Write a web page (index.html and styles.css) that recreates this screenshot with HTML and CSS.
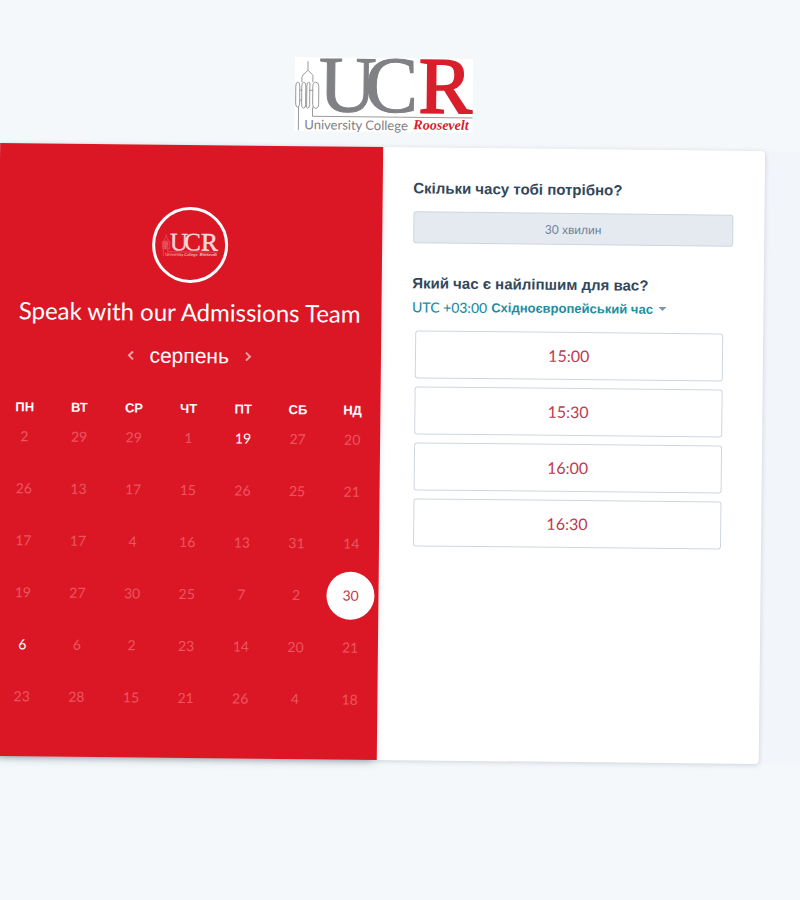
FILE: index.html
```
<!DOCTYPE html>
<html lang="uk">
<head>
<meta charset="utf-8">
<meta name="viewport" content="width=device-width, initial-scale=1">
<title>Speak with our Admissions Team</title>
<link rel="stylesheet" href="styles.css">
</head>
<body>
<svg class="defs" width="0" height="0" aria-hidden="true">
  <symbol id="ucr" viewBox="0 0 178 74" overflow="visible">
    <g class="tower">
      <path d="M13 4v9l-5 5-1 2v5M13 13l5 5v7M4 50v23M18 50v9H178"/>
      <path d="M1 29q0-4 2-4t2 4v17q0 4-2 4t-2-4zM7 29q0-4 2-4t2 4v18q0 4-2 4t-2-4zM12 29q0-4 2-4t1 4v18q0 4-2 4t-1-4zM18 29q0-4 3-4t3 4v18q0 4-3 4t-3-4zM5 33h2M5 43h2M15 33h3"/>
    </g>
    <text class="letter" x="24" y="54" font-size="80">U</text>
    <text class="letter" x="70" y="54" font-size="80">C</text>
    <text class="letter accent heavy" x="124" y="54" font-size="80">R</text>
    <text class="name" x="10" y="72" font-size="13">University College</text>
    <text class="name-em accent" x="119" y="71" font-size="14">Roosevelt</text>
  </symbol>
</svg>
<main class="page">
  <header class="brand">
    <svg class="logo" role="img" aria-label="University College Roosevelt"><use href="#ucr"/></svg>
  </header>
  <div class="stage">
    <div class="card">
      <section class="calendar">
        <div class="avatar"><svg class="logo-small" aria-hidden="true"><use href="#ucr"/></svg></div>
        <h1>Speak with our Admissions Team</h1>
        <div class="month">
          <button type="button" aria-label="Попередній місяць"><svg viewBox="0 0 8 12"><path d="M6 2L2 6l4 4"/></svg></button>
          <h2>серпень</h2>
          <button type="button" aria-label="Наступний місяць"><svg viewBox="0 0 8 12"><path d="M2 2l4 4-4 4"/></svg></button>
        </div>
        <table>
          <thead><tr><th>ПН</th><th>ВТ</th><th>СР</th><th>ЧТ</th><th>ПТ</th><th>СБ</th><th>НД</th></tr></thead>
          <tbody>
            <tr><td><button disabled>2</button></td><td><button disabled>29</button></td><td><button disabled>29</button></td><td><button disabled>1</button></td><td><button>19</button></td><td><button disabled>27</button></td><td><button disabled>20</button></td></tr>
            <tr><td><button disabled>26</button></td><td><button disabled>13</button></td><td><button disabled>17</button></td><td><button disabled>15</button></td><td><button disabled>26</button></td><td><button disabled>25</button></td><td><button disabled>21</button></td></tr>
            <tr><td><button disabled>17</button></td><td><button disabled>17</button></td><td><button disabled>4</button></td><td><button disabled>16</button></td><td><button disabled>13</button></td><td><button disabled>31</button></td><td><button disabled>14</button></td></tr>
            <tr><td><button disabled>19</button></td><td><button disabled>27</button></td><td><button disabled>30</button></td><td><button disabled>25</button></td><td><button disabled>7</button></td><td><button disabled>2</button></td><td><button class="selected" aria-pressed="true">30</button></td></tr>
            <tr><td><button>6</button></td><td><button disabled>6</button></td><td><button disabled>2</button></td><td><button disabled>23</button></td><td><button disabled>14</button></td><td><button disabled>20</button></td><td><button disabled>21</button></td></tr>
            <tr><td><button disabled>23</button></td><td><button disabled>28</button></td><td><button disabled>15</button></td><td><button disabled>21</button></td><td><button disabled>26</button></td><td><button disabled>4</button></td><td><button disabled>18</button></td></tr>
          </tbody>
        </table>
      </section>
      <section class="times">
        <h3>Скільки часу тобі потрібно?</h3>
        <button type="button" class="duration"><span class="latin">30</span> хвилин</button>
        <h3>Який час є найліпшим для вас?</h3>
        <button type="button" class="zone"><span class="latin">UTC +03:00</span> Східноєвропейський час<span class="caret"></span></button>
        <div class="slots">
          <button type="button">15:00</button>
          <button type="button">15:30</button>
          <button type="button">16:00</button>
          <button type="button">16:30</button>
        </div>
      </section>
    </div>
  </div>
</main>
</body>
</html>
```
FILE: styles.css
```
* { box-sizing: border-box; }

body {
  margin: 0;
  overflow: hidden;
  background: #f4f8fb;
  font-family: "Liberation Sans", sans-serif;
  color: #33475b;
}

h1, h2, h3 { margin: 0; }

button {
  padding: 0;
  border: 0;
  background: none;
  font: inherit;
  color: inherit;
  cursor: pointer;
}

.defs { position: absolute; }

/* The whole sheet is tilted slightly clockwise. */
.page {
  min-height: 100vh;
  margin: 0 38px 0 -3px;
  padding-top: 58px;
  transform: rotate(0.6deg);
}

.brand {
  display: flex;
  justify-content: center;
  margin-bottom: 15px;
}

.logo {
  width: 178px;
  height: 74px;
  overflow: visible;
  background: #fff;
  color: #808184;
  --accent: #d8202c;
}

.logo-small {
  width: 56px;
  height: 24px;
  overflow: visible;
  color: #fbd5d8;
  --accent: #fbd5d8;
}

.tower { fill: none; stroke: currentColor; stroke-width: 0.8; }
.letter { font-family: "Liberation Serif", serif; fill: currentColor; stroke: currentColor; stroke-width: 1; }
.name { font-family: Lato, sans-serif; fill: currentColor; }
.name-em { font-family: "Liberation Serif", serif; font-style: italic; font-weight: bold; }
.accent { fill: var(--accent); }
.heavy { stroke: var(--accent); stroke-width: 2; }

.stage {
  margin-right: -60px;
  padding-right: 60px;
  background: #f2f5fa;
}

.card {
  display: grid;
  grid-template-columns: 1fr 1fr;
  border-radius: 4px;
  background: #fff;
  box-shadow: 0 1px 5px rgba(45, 62, 80, 0.2);
}

.calendar {
  padding: 62px 0 31px;
  background: #dc1725;
  color: #fff;
  text-align: center;
  box-shadow: 0 5px 10px -4px rgba(45, 62, 80, 0.4);
}

.avatar {
  display: flex;
  align-items: center;
  justify-content: center;
  width: 76px;
  height: 76px;
  margin: 0 auto 13px;
  border: 3px solid #fff;
  border-radius: 50%;
}

h1 {
  font: 400 24px/32px Lato, sans-serif;
  white-space: nowrap;
}

.month {
  display: flex;
  align-items: center;
  justify-content: center;
  gap: 15px;
  margin: 14px 0 33px;
}

.month h2 { font-size: 21px; font-weight: 400; line-height: 28px; }
.month button { display: flex; }
.month svg { width: 8px; height: 12px; fill: none; stroke: #f3a2a8; stroke-width: 2; }

table {
  width: 100%;
  table-layout: fixed;
  border-collapse: collapse;
}

th { padding: 0; font-size: 13px; line-height: 12px; }
td { padding: 0 0 6px; }

td button {
  display: block;
  width: 48px;
  height: 48px;
  margin: -1px auto;
  border-radius: 50%;
  font: 14px/20px Lato, sans-serif;
}

td button:disabled { color: #ea5560; cursor: default; }
td .selected { background: #fff; color: #c8384c; }

.times { padding: 31px; }
.times h3 { font-size: 15px; line-height: 20px; }
.latin { font-family: Lato, sans-serif; }

.duration {
  width: 100%;
  height: 32px;
  margin: 13px 0 30px;
  border: 1px solid #cbd6e2;
  border-radius: 3px;
  background: #e5eaf1;
  color: #708297;
  font-size: 12px;
}

.zone {
  display: flex;
  align-items: center;
  gap: 4px;
  height: 20px;
  margin-top: 3px;
  color: #1e8e9f;
  font-size: 13px;
  font-weight: 700;
  white-space: nowrap;
}

.zone .latin { font-size: 14px; font-weight: 500; }

.caret {
  margin-left: 2px;
  border: 4px solid transparent;
  border-top-color: #7c98b6;
  border-bottom: 0;
}

.slots {
  display: grid;
  gap: 8px;
  margin: 14px 9px 0 3px;
}

.slots button {
  height: 48px;
  border: 1px solid #cfd6df;
  border-radius: 3px;
  background: #fff;
  color: #bd3a50;
  font: 16px/24px Lato, sans-serif;
}
```
